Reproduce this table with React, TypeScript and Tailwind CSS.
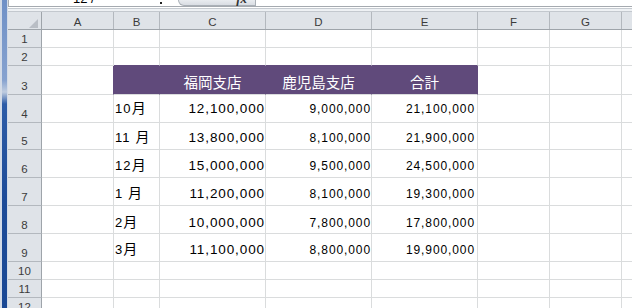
import React from "react";

const LIB = "font-['Liberation_Sans','Noto_Sans_CJK_JP',sans-serif]";
const CJK = "font-['Noto_Sans_CJK_JP',sans-serif]";

const rowHClass = [
  "h-[18px]",
  "h-[18px]",
  "h-[29px]",
  "h-[28px]",
  "h-[27px]",
  "h-[28px]",
  "h-[28px]",
  "h-[28px]",
  "h-[28px]",
  "h-[18px]",
  "h-[18px]",
  "h-[18px]",
];

const colW = ["w-[72px]", "w-[46px]", "w-[106px]", "w-[106px]", "w-[106px]", "w-[72px]", "w-[72px]", "flex-1"];
const letters = ["A", "B", "C", "D", "E", "F", "G", ""];

const data = [
  { m: "10", gap: false, c: "12,100,000", d: "9,000,000", e: "21,100,000", pb: "pb-[7px]" },
  { m: "11", gap: true, c: "13,800,000", d: "8,100,000", e: "21,900,000", pb: "pb-[5px]" },
  { m: "12", gap: false, c: "15,000,000", d: "9,500,000", e: "24,500,000", pb: "pb-[5px]" },
  { m: "1", gap: true, c: "11,200,000", d: "8,100,000", e: "19,300,000", pb: "pb-[5px]" },
  { m: "2", gap: false, c: "10,000,000", d: "7,800,000", e: "17,800,000", pb: "pb-[4px]" },
  { m: "3", gap: false, c: "11,100,000", d: "8,800,000", e: "19,900,000", pb: "pb-[5px]" },
];

function Cell({
  w,
  children,
  className = "",
}: {
  w: string;
  children?: React.ReactNode;
  className?: string;
}) {
  return <div className={`${w} flex shrink-0 border-r border-b ${className}`}>{children}</div>;
}

export default function App() {
  return (
    <div className="flex h-[308px] w-[632px] overflow-hidden bg-white">
      {/* window frame */}
      <div className="flex w-[8px] shrink-0 bg-[#d3dbe7]">
        <div className="ml-[2px] w-[5px] bg-[linear-gradient(to_bottom,#6f90c6_0px,#86a2cf_80px,#c0cde0_92px,#2d5ca7_104px,#1d4b98_200px,#1a4894_308px)]" />
      </div>

      <div className="flex w-[624px] shrink-0 flex-col">
        {/* formula bar remnant */}
        <div className="flex h-[6px] shrink-0 overflow-hidden border-l border-[#a9aeb4] bg-white">
          <div className="w-[64px] shrink-0" />
          <div className={`${LIB} -mt-[8px] h-[14px] w-[40px] shrink-0 text-[13px] leading-[14px] text-black`}>12 /</div>
          <div className="w-[47px] shrink-0" />
          <div className="mt-[2px] h-[2px] w-[2px] shrink-0 bg-[#222]" />
          <div className="w-[16px] shrink-0" />
          <div className="flex h-[6px] w-[78px] shrink-0 justify-end rounded-bl-[9px] border-b border-l border-r border-[#aab0b7] bg-[linear-gradient(to_bottom,#e9ecf0,#d9dde3)] pr-[8px]">
            <div className="-mt-[8px] font-['Liberation_Serif',serif] text-[13px] font-bold italic leading-[14px] text-[#333]">fx</div>
          </div>
          <div className="flex-1" />
        </div>
        <div className="h-px shrink-0 bg-[#a5aab0]" />
        <div className="h-px shrink-0 bg-white" />
        <div className="h-px shrink-0 bg-[#c6cbd1]" />
        <div className="h-[2px] shrink-0 bg-[#eef1f4]" />

        {/* column header row */}
        <div className="flex h-[19px] shrink-0 border-t border-b border-t-[#c3c8ce] border-b-[#9ea4aa] bg-[#dfe3e8]">
          <div className="flex w-[34px] shrink-0 items-end justify-end border-r border-[#9ea4aa] pb-[1px] pr-[3px]">
            <svg width="9" height="9" viewBox="0 0 9 9">
              <polygon points="9,0 9,9 0,9" fill="#b9bec5" />
            </svg>
          </div>
          {letters.map((l, i) => (
            <div
              key={i}
              className={`${colW[i]} flex shrink-0 items-end justify-center ${i < 7 ? "border-r border-[#b3b8be]" : ""} pb-[1px] ${LIB} text-[11.5px] leading-none text-[#3b3b3b]`}
            >
              {l}
            </div>
          ))}
        </div>

        {/* rows */}
        {rowHClass.map((h, r) => {
          const rowNum = r + 1;
          const isHeader = rowNum === 3;
          const dataIdx = rowNum - 4;
          const d = dataIdx >= 0 && dataIdx < data.length ? data[dataIdx] : null;
          const purpleBottom = rowNum === 2;
          const grid = "border-[#dadcdd] bg-white";
          const purple = "border-r-[#604a7b] border-b-[#dadcdd] bg-[#604a7b]";
          const topPurple = "border-r-[#dadcdd] border-b-[#604a7b] bg-white";
          const styleFor = () => (isHeader ? purple : purpleBottom ? topPurple : grid);
          return (
            <div key={r} className={`flex ${h} shrink-0`}>
              <div
                className={`flex w-[34px] shrink-0 items-end justify-center border-r border-b border-r-[#9ea4aa] border-b-[#b3b8be] bg-[#dfe3e8] pb-[2px] ${LIB} text-[11.5px] leading-none text-[#3b3b3b]`}
              >
                {rowNum}
              </div>
              {/* A */}
              <Cell w={colW[0]} className={isHeader ? "border-r-[#604a7b] border-b-[#dadcdd] bg-white" : grid} />
              {/* B */}
              <Cell w={colW[1]} className={`${styleFor()} items-end pl-[1px] ${d ? d.pb : ""}`}>
                {d && (
                  <span className={`${LIB} text-[13px] leading-none tracking-[1.1px] text-black`}>
                    {d.m}
                    {d.gap ? " " : ""}
                    <span className={`${CJK} text-[14px] tracking-normal`}>月</span>
                  </span>
                )}
              </Cell>
              {/* C */}
              <Cell
                w={colW[2]}
                className={`${styleFor()} ${isHeader ? "justify-center pb-[5px]" : "justify-end"} items-end ${d ? d.pb : ""}`}
              >
                {isHeader && <span className={`${CJK} text-[14.5px] leading-none text-white`}>福岡支店</span>}
                {d && <span className={`${LIB} text-[13.5px] leading-none tracking-[0.9px] text-black`}>{d.c}</span>}
              </Cell>
              {/* D */}
              <Cell
                w={colW[3]}
                className={`${styleFor()} ${isHeader ? "justify-center pb-[5px]" : "justify-end"} items-end ${d ? d.pb : ""}`}
              >
                {isHeader && <span className={`${CJK} text-[14.5px] leading-none text-white`}>鹿児島支店</span>}
                {d && <span className={`${LIB} text-[12px] leading-none tracking-[0.9px] text-black`}>{d.d}</span>}
              </Cell>
              {/* E */}
              <Cell
                w={colW[4]}
                className={`${styleFor()} ${isHeader ? "justify-center pb-[5px]" : "justify-end pr-[2px]"} items-end ${d ? d.pb : ""}`}
              >
                {isHeader && <span className={`${CJK} text-[14.5px] leading-none text-white`}>合計</span>}
                {d && <span className={`${LIB} text-[12px] leading-none tracking-[0.9px] text-black`}>{d.e}</span>}
              </Cell>
              <Cell w={colW[5]} className={grid} />
              <Cell w={colW[6]} className={grid} />
              <div className="flex-1 border-b border-[#dadcdd] bg-white" />
            </div>
          );
        })}
      </div>
    </div>
  );
}
